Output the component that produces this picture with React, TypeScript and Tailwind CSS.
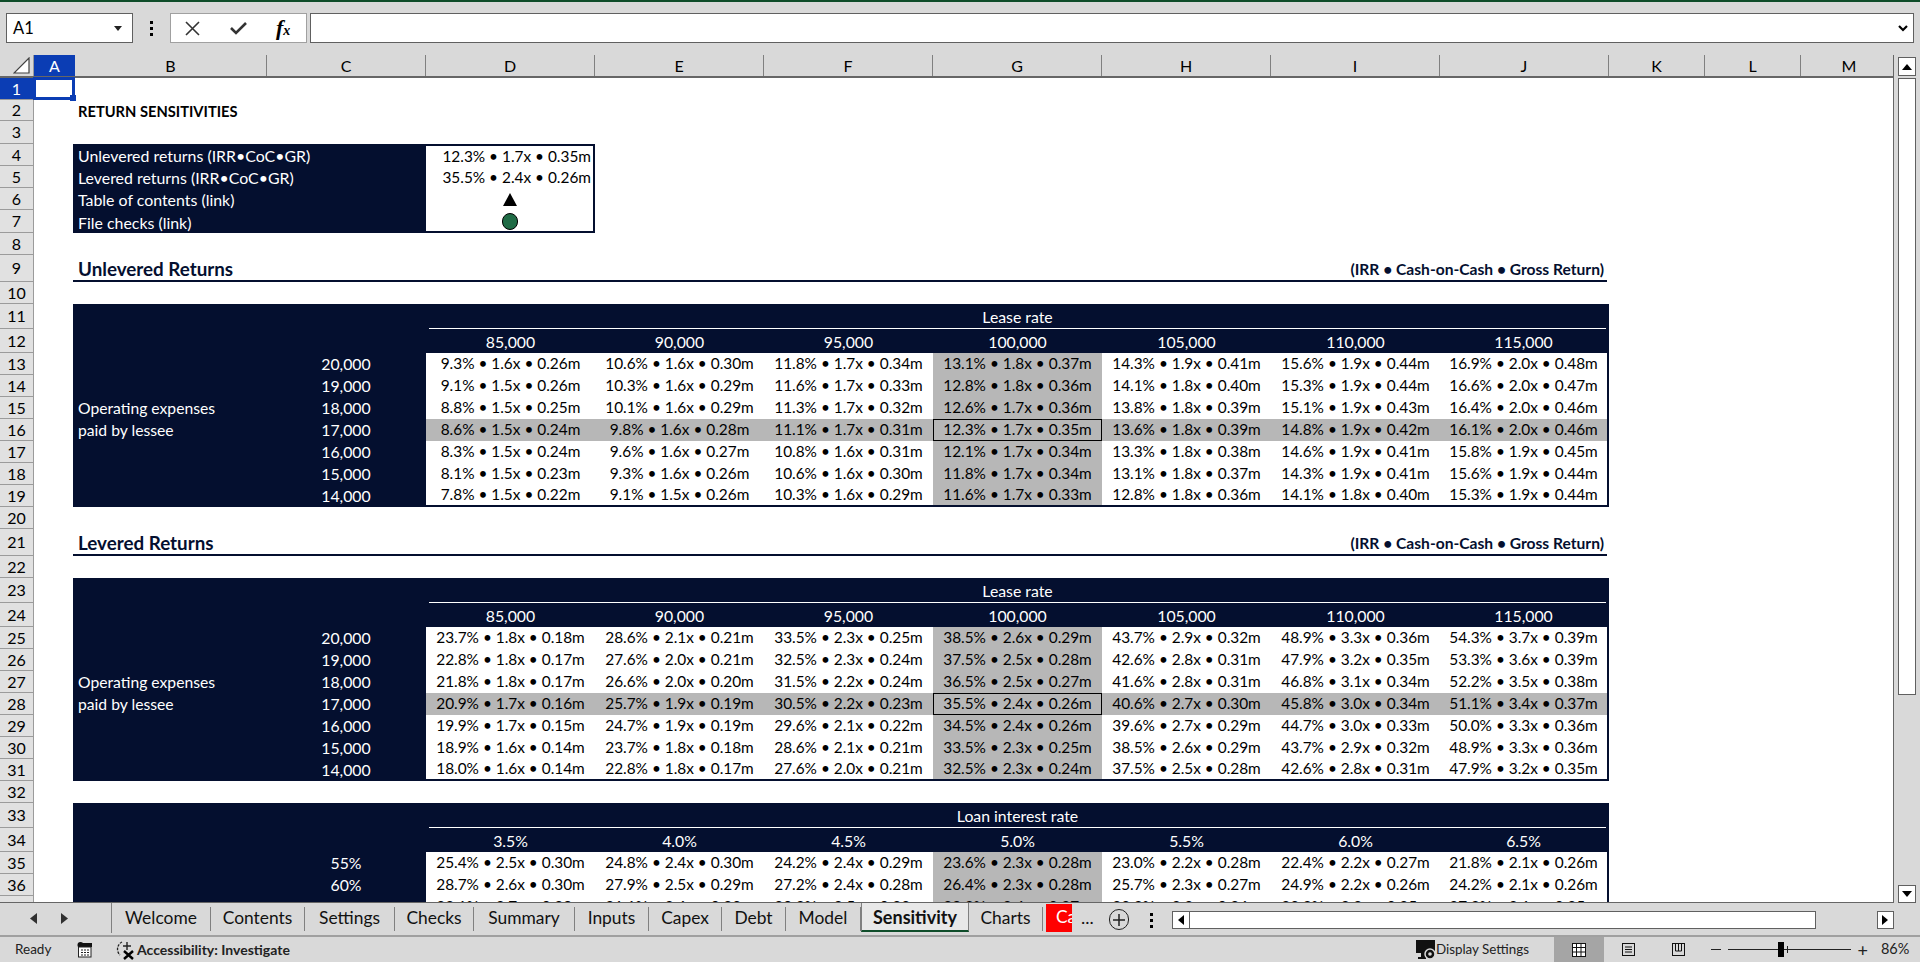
import { ReactNode } from 'react';

const grid = 'grid grid-cols-[34px_39px_193px_160px_repeat(6,169px)_167px_2px_95px_96px_1fr]';
const navy = 'bg-[#040f2f] text-white';

const rowHeights: Record<number, string> = {
  2: 'h-[21px]',
  3: 'h-[23px]',
  7: 'h-[23px]',
  9: 'h-[27px]',
  11: 'h-[25px]',
  12: 'h-[24px]',
  21: 'h-[27px]',
  23: 'h-[25px]',
  24: 'h-[24px]',
  33: 'h-[25px]',
  34: 'h-[24px]',
};

const leaseRates = ['85,000', '90,000', '95,000', '100,000', '105,000', '110,000', '115,000'];
const opex = ['20,000', '19,000', '18,000', '17,000', '16,000', '15,000', '14,000'];
const rates = ['3.5%', '4.0%', '4.5%', '5.0%', '5.5%', '6.0%', '6.5%'];

// each value is "irr coc gr"
const unlevered = [
  ['9.3 1.6 26', '10.6 1.6 30', '11.8 1.7 34', '13.1 1.8 37', '14.3 1.9 41', '15.6 1.9 44', '16.9 2.0 48'],
  ['9.1 1.5 26', '10.3 1.6 29', '11.6 1.7 33', '12.8 1.8 36', '14.1 1.8 40', '15.3 1.9 44', '16.6 2.0 47'],
  ['8.8 1.5 25', '10.1 1.6 29', '11.3 1.7 32', '12.6 1.7 36', '13.8 1.8 39', '15.1 1.9 43', '16.4 2.0 46'],
  ['8.6 1.5 24', '9.8 1.6 28', '11.1 1.7 31', '12.3 1.7 35', '13.6 1.8 39', '14.8 1.9 42', '16.1 2.0 46'],
  ['8.3 1.5 24', '9.6 1.6 27', '10.8 1.6 31', '12.1 1.7 34', '13.3 1.8 38', '14.6 1.9 41', '15.8 1.9 45'],
  ['8.1 1.5 23', '9.3 1.6 26', '10.6 1.6 30', '11.8 1.7 34', '13.1 1.8 37', '14.3 1.9 41', '15.6 1.9 44'],
  ['7.8 1.5 22', '9.1 1.5 26', '10.3 1.6 29', '11.6 1.7 33', '12.8 1.8 36', '14.1 1.8 40', '15.3 1.9 44'],
];

const levered = [
  ['23.7 1.8 18', '28.6 2.1 21', '33.5 2.3 25', '38.5 2.6 29', '43.7 2.9 32', '48.9 3.3 36', '54.3 3.7 39'],
  ['22.8 1.8 17', '27.6 2.0 21', '32.5 2.3 24', '37.5 2.5 28', '42.6 2.8 31', '47.9 3.2 35', '53.3 3.6 39'],
  ['21.8 1.8 17', '26.6 2.0 20', '31.5 2.2 24', '36.5 2.5 27', '41.6 2.8 31', '46.8 3.1 34', '52.2 3.5 38'],
  ['20.9 1.7 16', '25.7 1.9 19', '30.5 2.2 23', '35.5 2.4 26', '40.6 2.7 30', '45.8 3.0 34', '51.1 3.4 37'],
  ['19.9 1.7 15', '24.7 1.9 19', '29.6 2.1 22', '34.5 2.4 26', '39.6 2.7 29', '44.7 3.0 33', '50.0 3.3 36'],
  ['18.9 1.6 14', '23.7 1.8 18', '28.6 2.1 21', '33.5 2.3 25', '38.5 2.6 29', '43.7 2.9 32', '48.9 3.3 36'],
  ['18.0 1.6 14', '22.8 1.8 17', '27.6 2.0 21', '32.5 2.3 24', '37.5 2.5 28', '42.6 2.8 31', '47.9 3.2 35'],
];

const leverage = [
  ['25.4 2.5 30', '24.8 2.4 30', '24.2 2.4 29', '23.6 2.3 28', '23.0 2.2 28', '22.4 2.2 27', '21.8 2.1 26'],
  ['28.7 2.6 30', '27.9 2.5 29', '27.2 2.4 28', '26.4 2.3 28', '25.7 2.3 27', '24.9 2.2 26', '24.2 2.1 26'],
  ['32.1 2.7 29', '31.1 2.6 28', '30.2 2.5 28', '29.3 2.4 27', '28.3 2.3 26', '28.3 2.3 25', '27.3 2.1 25'],
];

function fmt(v: string) {
  const [irr, coc, gr] = v.split(' ');
  return `${irr}% • ${coc}x • 0.${gr}m`;
}

function Row({ n, children }: { n: number; children?: ReactNode }) {
  const selected = n === 1;
  return (
    <div className={`${grid} ${rowHeights[n] ?? 'h-[22px]'} shrink-0`}>
      <div
        className={`flex items-center justify-center border-b border-r border-[#9b9b9b] text-[16px] ${
          selected ? 'bg-[#0b3db4] text-white' : 'bg-[#e1e1e1] text-black'
        }`}
      >
        {n}
      </div>
      {children}
    </div>
  );
}

function Heading({ n, title }: { n: number; title: string }) {
  return (
    <Row n={n}>
      <div />
      <div className="col-span-9 flex items-center justify-between border-b-2 border-[#040f2f] pl-[5px] pr-[3px] pt-[3px] text-[#040f2f]">
        <span className="text-[18.8px] font-bold">{title}</span>
        <span className="pt-[1px] text-[15.6px] font-bold">(IRR • Cash-on-Cash • Gross Return)</span>
      </div>
    </Row>
  );
}

function SensTable({
  start,
  axis,
  cols,
  labels,
  values,
  side,
  midRow,
}: {
  start: number;
  axis: string;
  cols: string[];
  labels: string[];
  values: string[][];
  side?: boolean;
  midRow?: number;
}) {
  return (
    <>
      <Row n={start}>
        <div />
        <div className={`col-span-2 ${navy}`} />
        <div className={`col-span-8 ${navy} pl-[3px] pr-[3px]`}>
          <div className="flex h-full items-center justify-center border-b border-white pt-[1px] text-[15.8px]">{axis}</div>
        </div>
      </Row>
      <Row n={start + 1}>
        <div />
        <div className={`col-span-2 ${navy}`} />
        {cols.map((c) => (
          <div key={c} className={`${navy} flex items-center justify-center pt-[2px] text-[15.8px]`}>
            {c}
          </div>
        ))}
        <div className={navy} />
      </Row>
      {values.map((vals, r) => {
        const last = r === values.length - 1 && side;
        return (
          <Row key={r} n={start + 2 + r}>
            <div />
            <div className={`${navy} flex items-center pl-[5px] pt-[1px] text-[15.7px]`}>
              {side && r === 2 && 'Operating expenses'}
              {side && r === 3 && 'paid by lessee'}
            </div>
            <div className={`${navy} flex items-center justify-center text-[15.8px]`}>{labels[r]}</div>
            {vals.map((v, c) => {
              const shaded = c === 3 || r === midRow;
              const boxed = c === 3 && r === midRow;
              return (
                <div
                  key={c}
                  className={`flex items-center justify-center text-[15.4px] text-black ${
                    shaded ? 'bg-[#b7b7b7]' : 'bg-white'
                  } ${boxed ? 'border border-black' : ''} ${last ? 'border-b-2 border-b-[#040f2f]' : ''}`}
                >
                  {fmt(v)}
                </div>
              );
            })}
            <div className="bg-[#040f2f]" />
          </Row>
        );
      })}
    </>
  );
}

function SummaryRow({
  n,
  label,
  first,
  last,
  end,
  children,
}: {
  n: number;
  label: string;
  first?: boolean;
  last?: boolean;
  end?: boolean;
  children: ReactNode;
}) {
  const edge = `${first ? 'border-t-2' : ''} ${last ? 'border-b-2' : ''} border-[#040f2f]`;
  return (
    <Row n={n}>
      <div />
      <div className={`col-span-2 ${navy} flex items-center pl-[5px] pt-[2px] text-[15.9px]`}>{label}</div>
      <div
        className={`${edge} flex items-center border-r-2 bg-white text-[15.4px] text-black ${
          end ? 'justify-end pr-[2px] pt-[1px]' : 'justify-center'
        }`}
      >
        {children}
      </div>
    </Row>
  );
}

function SheetGrid() {
  return (
    <div className="relative flex h-[848px] w-[1894px] flex-col overflow-hidden border-b border-r border-[#666666] bg-white">
      {/* column headers */}
      <div className="grid h-[23px] shrink-0 grid-cols-[34px_41px_192px_159px_repeat(7,169px)_96px_96px_1fr] border-b-2 border-[#666666] bg-[#d9d9d9] text-[16px] text-black">
        <div className="flex items-end justify-end border-r border-[#9b9b9b] pb-[2px] pr-[3px]">
          <svg width="17" height="17" viewBox="0 0 17 17">
            <path d="M16 1 L16 16 L1 16 Z" fill="#fff" stroke="#404040" strokeWidth="1.2" />
          </svg>
        </div>
        <div className="flex items-center justify-center bg-[#0b3db4] text-white">A</div>
        {['B', 'C', 'D', 'E', 'F', 'G', 'H', 'I', 'J', 'K', 'L'].map((c) => (
          <div key={c} className="flex items-center justify-center border-r border-[#808080]">
            {c}
          </div>
        ))}
        <div className="flex items-center justify-center pl-[4px]">M</div>
      </div>

      <Row n={1}>
        <div className="relative -ml-[1px] -mt-[1px] h-[23px] w-[42px] border-[3px] border-[#0b3db4] bg-white">
          <div className="absolute -bottom-[4px] -right-[4px] h-[6px] w-[6px] bg-[#0b3db4]" />
        </div>
      </Row>
      <Row n={2}>
        <div />
        <div className="col-span-2 flex items-center pl-[5px] pt-[2px] text-[14.7px] font-bold text-black">RETURN SENSITIVITIES</div>
      </Row>
      <Row n={3} />
      <SummaryRow n={4} label="Unlevered returns (IRR•CoC•GR)" first end>
        12.3% • 1.7x • 0.35m
      </SummaryRow>
      <SummaryRow n={5} label="Levered returns (IRR•CoC•GR)" end>
        35.5% • 2.4x • 0.26m
      </SummaryRow>
      <SummaryRow n={6} label="Table of contents (link)">
        <svg width="14" height="13" viewBox="0 0 14 13">
          <path d="M7 0 L14 13 L0 13 Z" fill="#000" />
        </svg>
      </SummaryRow>
      <SummaryRow n={7} label="File checks (link)" last>
        <span className="mt-[2px] h-[17px] w-[16px] rounded-full border border-black bg-[#1f6b45]" />
      </SummaryRow>
      <Row n={8} />
      <Heading n={9} title="Unlevered Returns" />
      <Row n={10} />
      <SensTable start={11} axis="Lease rate" cols={leaseRates} labels={opex} values={unlevered} side midRow={3} />
      <Row n={20} />
      <Heading n={21} title="Levered Returns" />
      <Row n={22} />
      <SensTable start={23} axis="Lease rate" cols={leaseRates} labels={opex} values={levered} side midRow={3} />
      <Row n={32} />
      <SensTable start={33} axis="Loan interest rate" cols={rates} labels={['55%', '60%', '65%']} values={leverage} />
    </div>
  );
}

function VerticalScroll() {
  return (
    <div className="flex h-[848px] w-[26px] flex-col pl-[4px] pr-[4px] pt-[2px]">
      <div className="flex h-[19px] shrink-0 items-center justify-center border border-[#606060] bg-white">
        <svg width="10" height="6" viewBox="0 0 10 6">
          <path d="M5 0 L10 6 L0 6 Z" fill="#000" />
        </svg>
      </div>
      <div className="mt-[2px] h-[617px] shrink-0 border border-[#606060] bg-white" />
      <div className="flex-1" />
      <div className="flex h-[18px] shrink-0 items-center justify-center border border-[#606060] bg-white">
        <svg width="10" height="6" viewBox="0 0 10 6">
          <path d="M0 0 L10 0 L5 6 Z" fill="#000" />
        </svg>
      </div>
    </div>
  );
}

const tabs = [
  { name: 'Welcome', w: 'w-[99px]' },
  { name: 'Contents', w: 'w-[94px]' },
  { name: 'Settings', w: 'w-[90px]' },
  { name: 'Checks', w: 'w-[79px]' },
  { name: 'Summary', w: 'w-[101px]' },
  { name: 'Inputs', w: 'w-[74px]' },
  { name: 'Capex', w: 'w-[73px]' },
  { name: 'Debt', w: 'w-[64px]' },
  { name: 'Model', w: 'w-[75px]' },
];

function TabBar() {
  return (
    <div className="flex h-[32px] shrink-0 items-start bg-[#d9d9d9] text-[17.4px] text-[#111111]">
      <div className="flex h-[30px] w-[112px] items-center border-r border-[#808080] pl-[30px]">
        <svg width="7" height="11" viewBox="0 0 7 11">
          <path d="M7 0 L7 11 L0 5.5 Z" fill="#303030" />
        </svg>
        <svg width="7" height="11" viewBox="0 0 7 11" className="ml-[24px]">
          <path d="M0 0 L0 11 L7 5.5 Z" fill="#303030" />
        </svg>
      </div>
      {tabs.map((t) => (
        <div key={t.name} className={`mt-[4px] flex h-[24px] ${t.w} items-center justify-center border-r border-[#808080] pb-[3px] last:border-r-0`}>
          {t.name}
        </div>
      ))}
      <div className="flex h-[29px] w-[108px] items-center justify-center border-x border-b-2 border-x-[#808080] border-b-[#0f4d2a] bg-[#e8e8e8] text-[18px] font-bold">
        Sensitivity
      </div>
      <div className="mt-[4px] flex h-[24px] w-[74px] items-center justify-center border-r border-[#808080] pb-[3px]">Charts</div>
      <div className="ml-[3px] mt-[1px] flex h-[28px] w-[26px] items-center overflow-hidden bg-[#ff0000] pb-[2px] pl-[10px] text-white">Ca</div>
      <div className="ml-[9px] mt-[5px] text-[18px]">...</div>
      <div className="ml-[15px] mt-[6px] flex h-[21px] w-[20px] items-center justify-center rounded-full border border-[#202020]">
        <svg width="12" height="12" viewBox="0 0 12 12">
          <path d="M6 0 V12 M0 6 H12" stroke="#202020" strokeWidth="1.5" />
        </svg>
      </div>
      <div className="ml-[21px] mt-[10px] flex h-[15px] w-[3px] flex-col justify-between">
        <span className="h-[3px] bg-black" />
        <span className="h-[3px] bg-black" />
        <span className="h-[3px] bg-black" />
      </div>
      <div className="ml-[19px] mt-[8px] flex h-[18px] w-[18px] items-center justify-center border border-[#606060] bg-white">
        <svg width="6" height="10" viewBox="0 0 6 10">
          <path d="M6 0 L6 10 L0 5 Z" fill="#000" />
        </svg>
      </div>
      <div className="mt-[8px] h-[18px] w-[626px] border-y border-r border-[#606060] bg-white" />
      <div className="ml-[61px] mt-[8px] flex h-[18px] w-[17px] items-center justify-center border border-[#606060] bg-white">
        <svg width="6" height="10" viewBox="0 0 6 10">
          <path d="M0 0 L0 10 L6 5 Z" fill="#000" />
        </svg>
      </div>
    </div>
  );
}

function StatusBar() {
  return (
    <div className="flex h-[27px] shrink-0 items-center border-t-2 border-[#a0a0a0] bg-[#d9d9d9] text-[13.5px] text-[#222222]">
      <span className="ml-[15px] w-[62px]">Ready</span>
      <svg width="15" height="16" viewBox="0 0 15 16">
        <circle cx="3.5" cy="3" r="3" fill="#111" />
        <rect x="3" y="1" width="12" height="4" fill="#111" />
        <rect x="1.5" y="5" width="12.5" height="10" fill="#fff" stroke="#222" />
        <path d="M4 8 H6 M7 8 H9 M10 8 H12 M4 10.5 H6 M7 10.5 H9 M10 10.5 H12 M4 13 H6 M7 13 H9 M10 13 H12" stroke="#222" />
      </svg>
      <svg width="21" height="20" viewBox="0 0 21 20" className="ml-[23px]">
        <path d="M7 2 A8 8 0 0 0 5 15" fill="none" stroke="#222" strokeWidth="1.3" strokeDasharray="2.5 1.2" />
        <path d="M12 2 V10 M8 6 H16" stroke="#222" strokeWidth="1.4" />
        <path d="M9 11 L18 19 M18 11 L9 19" stroke="#000" strokeWidth="2.4" />
      </svg>
      <span className="ml-[1px] text-[14px] font-bold">Accessibility: Investigate</span>
      <div className="ml-[1126px] flex items-center">
        <svg width="20" height="20" viewBox="0 0 20 20">
          <rect x="0" y="0" width="19" height="13" fill="#111" />
          <rect x="5" y="13" width="4" height="4" fill="#111" />
          <rect x="2" y="17" width="8" height="2" fill="#111" />
          <circle cx="14" cy="14" r="5" fill="#111" stroke="#d9d9d9" strokeWidth="1.5" />
          <circle cx="14" cy="14" r="1.8" fill="#d9d9d9" />
        </svg>
        <span className="w-[118px] text-[13.4px]">Display Settings</span>
      </div>
      <div className="flex h-full w-[50px] items-center justify-center bg-[#a5a5a5]">
        <svg width="14" height="14" viewBox="0 0 14 14">
          <rect x="0.5" y="0.5" width="13" height="13" fill="#fff" stroke="#111" />
          <path d="M0 4.5 H14 M0 9 H14 M4.5 0 V14 M9 0 V14" stroke="#111" />
        </svg>
      </div>
      <div className="flex h-full w-[50px] items-center justify-center">
        <svg width="13" height="13" viewBox="0 0 13 13">
          <rect x="0.5" y="0.5" width="12" height="12" fill="none" stroke="#111" />
          <path d="M3 4 H10 M3 6.5 H10 M3 9 H10" stroke="#111" />
        </svg>
      </div>
      <div className="flex h-full w-[50px] items-center justify-center">
        <svg width="13" height="13" viewBox="0 0 13 13">
          <rect x="0.5" y="0.5" width="12" height="12" fill="none" stroke="#111" />
          <path d="M3.5 0 V8 H9.5 V0 M6.5 0 V8" fill="none" stroke="#111" />
        </svg>
      </div>
      <div className="relative ml-[7px] flex h-full w-[157px] items-center">
        <span className="h-px w-[10px] bg-[#222222]" />
        <span className="ml-[7px] h-px w-[124px] bg-[#222222]" />
        <span className="ml-[6px] text-[18px] leading-none">+</span>
        <span className="absolute left-[67px] top-[5px] h-[15px] w-[6px] bg-black" />
        <span className="absolute left-[76px] top-[9px] h-[7px] w-px bg-[#222222]" />
      </div>
      <span className="ml-[13px] text-[14.5px]">86%</span>
    </div>
  );
}

export default function App() {
  return (
    <div className="flex h-[962px] w-[1920px] flex-col overflow-hidden bg-[#d9d9d9] font-['Lato',sans-serif] leading-none">
      <div className="h-[2px] shrink-0 bg-[#0f4d2a]" />
      {/* formula bar */}
      <div className="flex h-[53px] shrink-0 pl-[6px] pr-[6px] pt-[11px]">
        <div className="flex h-[30px] w-[127px] items-center justify-between border border-[#606060] bg-white pl-[6px] pr-[10px] text-[16.5px] text-black">
          A1
          <svg width="8" height="5" viewBox="0 0 8 5">
            <path d="M0 0 H8 L4 5 Z" fill="#222" />
          </svg>
        </div>
        <div className="ml-[17px] mt-[8px] flex h-[15px] w-[3px] flex-col justify-between">
          <span className="h-[3px] bg-black" />
          <span className="h-[3px] bg-black" />
          <span className="h-[3px] bg-black" />
        </div>
        <div className="ml-[17px] flex h-[30px] w-[137px] items-center border border-[#a0a0a0] bg-white pl-[14px]">
          <svg width="15" height="15" viewBox="0 0 15 15">
            <path d="M1 1 L14 14 M14 1 L1 14" stroke="#333" strokeWidth="1.6" />
          </svg>
          <svg width="17" height="14" viewBox="0 0 17 14" className="ml-[30px]">
            <path d="M1 7 L6 12 L16 2" fill="none" stroke="#333" strokeWidth="2.6" />
          </svg>
          <span className="ml-[29px] font-['Liberation_Serif',serif] text-[22px] font-bold italic text-black">
            f<span className="text-[14px]">x</span>
          </span>
        </div>
        <div className="ml-[3px] flex h-[30px] flex-1 items-center justify-end border border-[#606060] bg-white pr-[5px]">
          <svg width="10" height="7" viewBox="0 0 10 7">
            <path d="M1 1 L5 5 L9 1" fill="none" stroke="#000" strokeWidth="2.2" />
          </svg>
        </div>
      </div>

      <div className="flex shrink-0">
        <SheetGrid />
        <VerticalScroll />
      </div>
      <TabBar />
      <StatusBar />
    </div>
  );
}
